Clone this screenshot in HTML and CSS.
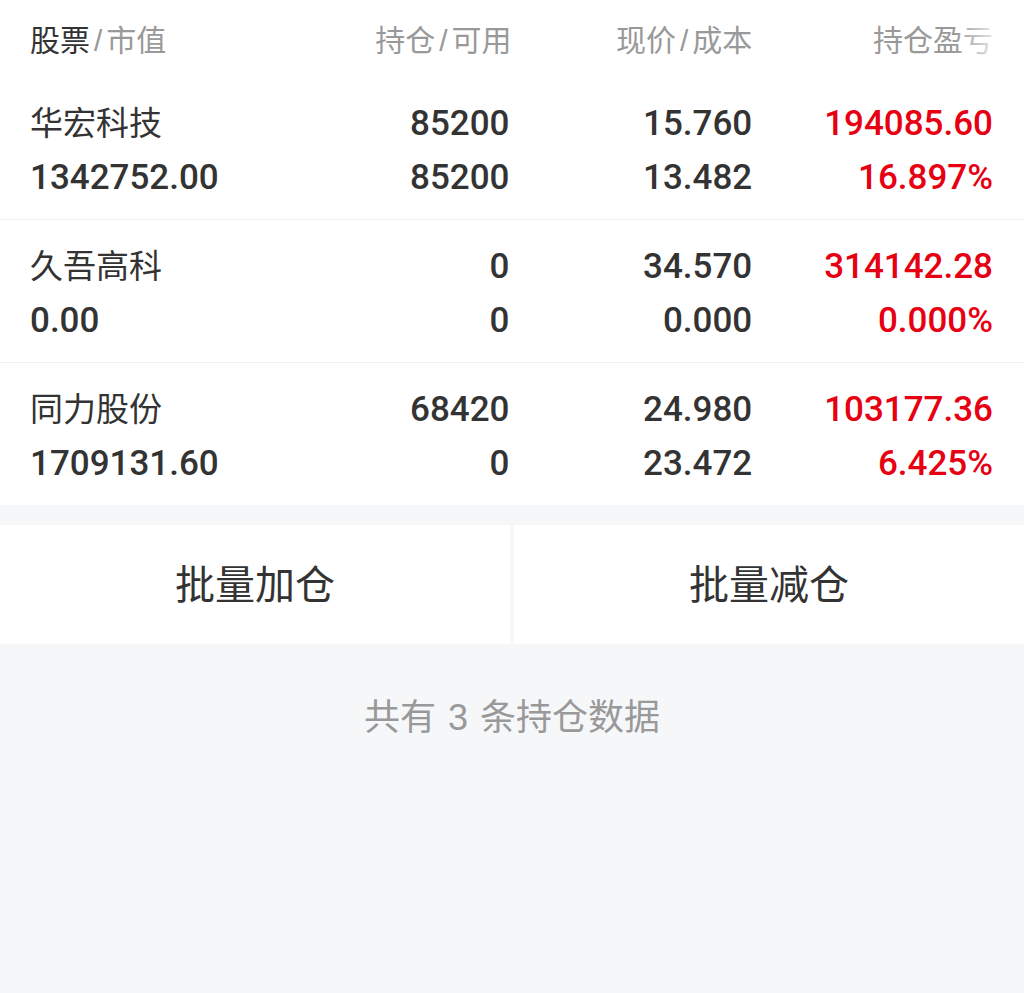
FILE: index.html
```html
<!DOCTYPE html>
<html lang="zh-CN">
<head>
  <meta charset="UTF-8">
  <meta name="viewport" content="width=device-width, initial-scale=1.0">
  <title>持仓</title>
  <link rel="stylesheet" href="styles.css">
</head>
<body>
  <div class="list">
    <div class="head">
      <div class="col">股票<span class="sep">/</span><span class="dim">市值</span></div>
      <div class="col right dim">持仓<span class="sep">/</span>可用</div>
      <div class="col right dim">现价<span class="sep">/</span>成本</div>
      <div class="col right dim">持仓盈亏</div>
    </div>

    <div class="row">
      <div class="col">
        <div class="name">华宏科技</div>
        <div class="num">1342752.00</div>
      </div>
      <div class="col right">
        <div class="num">85200</div>
        <div class="num">85200</div>
      </div>
      <div class="col right">
        <div class="num">15.760</div>
        <div class="num">13.482</div>
      </div>
      <div class="col right up">
        <div class="num">194085.60</div>
        <div class="num">16.897%</div>
      </div>
    </div>

    <div class="row">
      <div class="col">
        <div class="name">久吾高科</div>
        <div class="num">0.00</div>
      </div>
      <div class="col right">
        <div class="num">0</div>
        <div class="num">0</div>
      </div>
      <div class="col right">
        <div class="num">34.570</div>
        <div class="num">0.000</div>
      </div>
      <div class="col right up">
        <div class="num">314142.28</div>
        <div class="num">0.000%</div>
      </div>
    </div>

    <div class="row">
      <div class="col">
        <div class="name">同力股份</div>
        <div class="num">1709131.60</div>
      </div>
      <div class="col right">
        <div class="num">68420</div>
        <div class="num">0</div>
      </div>
      <div class="col right">
        <div class="num">24.980</div>
        <div class="num">23.472</div>
      </div>
      <div class="col right up">
        <div class="num">103177.36</div>
        <div class="num">6.425%</div>
      </div>
    </div>
  </div>

  <div class="actions">
    <button class="action">批量加仓</button>
    <button class="action">批量减仓</button>
  </div>

  <p class="summary">共有 3 条持仓数据</p>
</body>
</html>
```

FILE: styles.css
```css
body {
  margin: 0;
  background: #f6f7f9;
  font-family: "Liberation Sans", "Noto Sans CJK SC", sans-serif;
  color: #333;
}
.list {
  background: #fff;
}
.head, .row {
  display: grid;
  grid-template-columns: repeat(4, 1fr);
  padding: 0 31px 0 30px;
}
.head {
  position: relative;
  height: 77px;
  align-items: center;
  font-size: 30px;
  padding-bottom: 2px;
  box-sizing: border-box;
}
.head::after {
  content: "";
  position: absolute;
  top: 0;
  right: 0;
  width: 70px;
  height: 100%;
  background: linear-gradient(to right, rgba(255,255,255,0) 0, rgba(255,255,255,0.8) 60%, #fff 100%);
}
.dim {
  color: #999;
}
.sep {
  color: #999;
  margin: 0 4px;
}
.right {
  text-align: right;
}
.row {
  padding-top: 20px;
  padding-bottom: 14px;
  border-bottom: 1px solid #f0f0f0;
}
.row:last-child {
  border-bottom: 0;
}
.row .col:nth-child(2) {
  padding-right: 2px;
}
.name, .num {
  height: 54px;
  line-height: 54px;
  white-space: nowrap;
}
.name {
  font-size: 33px;
}
.num {
  font-family: Roboto, "Liberation Sans", sans-serif;
  font-weight: 500;
  font-size: 35px;
  color: #333;
}
.up .num {
  color: #e60012;
}
.actions {
  display: flex;
  gap: 4px;
  margin-top: 20px;
}
.action {
  flex: 1;
  height: 119px;
  border: 0;
  background: #fff;
  font-family: inherit;
  font-size: 40px;
  color: #333;
  padding: 0 0 6px;
}
.summary {
  margin: 44px 0 0;
  text-align: center;
  font-size: 36px;
  color: #999;
  word-spacing: 2px;
}
```
